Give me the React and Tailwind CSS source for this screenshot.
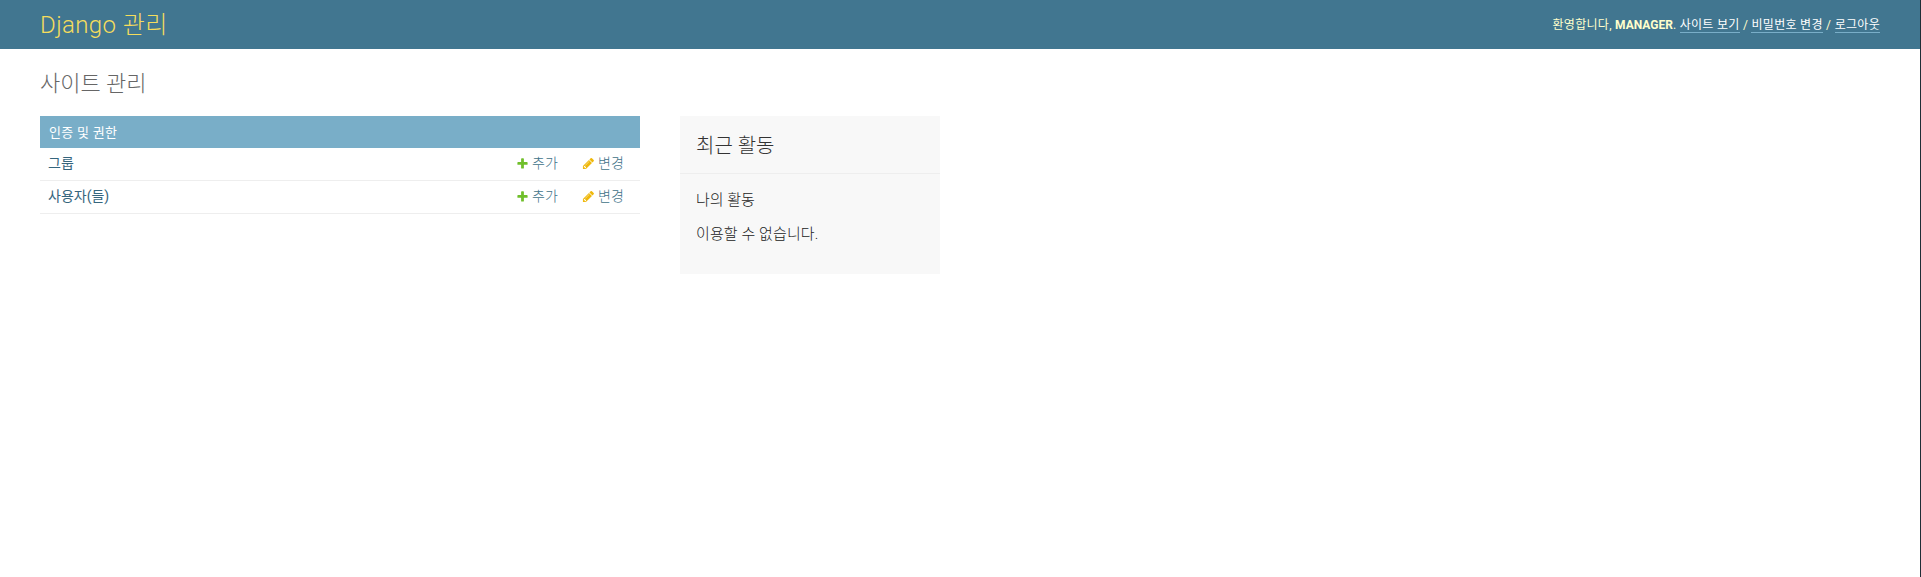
const fontStack = "font-['Roboto','Noto_Sans_CJK_KR','Lucida_Grande',sans-serif]";

function AddIcon() {
  return (
    <svg width="13" height="13" viewBox="0 0 1792 1792" className="inline-block mr-[3px] align-[-2px]">
      <path
        fill="#70bf2b"
        d="M1600 796v192q0 40-28 68t-68 28h-416v416q0 40-28 68t-68 28h-192q-40 0-68-28t-28-68v-416h-416q-40 0-68-28t-28-68v-192q0-40 28-68t68-28h416v-416q0-40 28-68t68-28h192q40 0 68 28t28 68v416h416q40 0 68 28t28 68z"
      />
    </svg>
  );
}

function ChangeIcon() {
  return (
    <svg width="13" height="13" viewBox="0 0 1792 1792" className="inline-block mr-[3px] align-[-2px]">
      <path
        fill="#efb80b"
        d="M491 1536l91-91-235-235-91 91v107h128v128h107zm523-928q0-22-22-22-10 0-17 7l-542 542q-7 7-7 17 0 22 22 22 10 0 17-7l542-542q7-7 7-17zm-54-192l416 416-832 832h-416v-416zm683 96q0 53-37 90l-166 166-416-416 166-165q36-38 90-38 53 0 91 38l235 234q37 39 37 91z"
      />
    </svg>
  );
}

function ModelRow({ name }) {
  return (
    <div className="flex items-center h-[33px] border-b border-[#eeeeee] text-[14px] leading-4 pb-[2px] pr-[16px]">
      <a href="#" className="flex-1 pl-2 font-normal text-[#35657d]">
        {name}
      </a>
      <a href="#" className="w-[66px] font-light text-[#3f7288] whitespace-nowrap">
        <AddIcon />
        추가
      </a>
      <a href="#" className="w-[42px] font-light text-[#3f7288] whitespace-nowrap">
        <ChangeIcon />
        변경
      </a>
    </div>
  );
}

export default function App() {
  return (
    <div className={`min-h-[577px] bg-white text-[#333333] border-r border-[#1f2d36] ${fontStack}`}>
      <div className="flex items-center justify-between h-[49px] bg-[#417690] pl-10 pr-10 text-[#ffffcc]">
        <div className="text-[24px] font-light text-[#f5dd5d] tracking-[0.4px]">Django 관리</div>
        <div className="text-[12px] text-[#ffffcc] tracking-[0.3px]">
          환영합니다, <strong className="font-bold uppercase tracking-normal">manager</strong>.{" "}
          <a href="#" className="text-white border-b border-[#79aec8]">사이트 보기</a> /{" "}
          <a href="#" className="text-white border-b border-[#79aec8]">비밀번호 변경</a> /{" "}
          <a href="#" className="text-white border-b border-[#79aec8]">로그아웃</a>
        </div>
      </div>

      <div className="px-10 pt-[23px]">
        <h1 className="text-[22px] leading-6 font-light text-[#666666] mb-[20px]">사이트 관리</h1>
        <div className="flex gap-10 items-start">
          <div className="w-[600px]">
            <div className="h-8 flex items-center pl-[9px] pr-2 pt-[2px] bg-[#79aec8] text-white text-[13px] tracking-[0.3px]">인증 및 권한</div>
            <ModelRow name="그룹" />
            <ModelRow name="사용자(들)" />
          </div>

          <div className="w-[260px] h-[158px] bg-[#f8f8f8] text-[#333333]">
            <h2 className="h-[58px] flex items-center px-4 pt-[2px] text-[20px] font-light border-b border-[#eeeeee]">최근 활동</h2>
            <h3 className="px-4 mt-[17px] text-[15px] leading-[18px] font-light text-[#222222]">나의 활동</h3>
            <p className="px-4 mt-4 text-[15px] leading-[18px] font-light text-[#222222] tracking-[0.1px]">이용할 수 없습니다.</p>
          </div>
        </div>
      </div>
    </div>
  );
}
